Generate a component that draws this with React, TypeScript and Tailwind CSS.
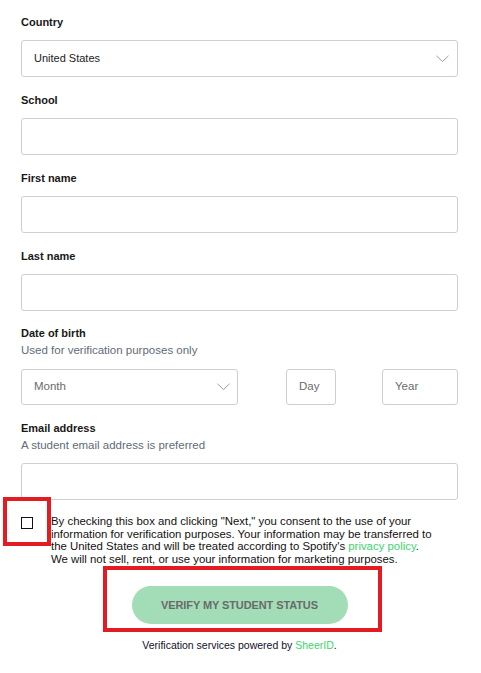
const font = "font-['Liberation_Sans',Arial,sans-serif]"

const Chevron = () => (
  <svg width="13" height="8" viewBox="0 0 13 8" fill="none" className="shrink-0">
    <path d="M0.5 0.8 6.5 6.6 12.5 0.8" stroke="#9a9a9a" strokeWidth="1" />
  </svg>
)

const Label = ({ text, mt }: { text: string; mt: string }) => (
  <p className={`${mt} text-[11px] leading-[14px] font-bold text-[#181818]`}>{text}</p>
)

const Hint = ({ text }: { text: string }) => (
  <p className="mt-[3px] text-[11.5px] leading-[14px] text-[#5f6b7a]">{text}</p>
)

const Box = ({ mt, children }: { mt: string; children?: React.ReactNode }) => (
  <div className={`${mt} h-[37px] border border-[#cfcfcf] rounded-[3px] bg-white flex items-center pl-[12px] pr-[8px]`}>
    {children}
  </div>
)

const App = () => {
  return (
    <div className={`relative w-[481px] h-[673px] bg-white ${font} overflow-hidden`}>
      <div className="ml-[21px] w-[437px] pt-[15px]">
        <Label text="Country" mt="mt-0" />
        <Box mt="mt-[11px]">
          <span className="flex-1 text-[11px] text-[#222]">United States</span>
          <Chevron />
        </Box>

        <Label text="School" mt="mt-[16px]" />
        <Box mt="mt-[11px]" />

        <Label text="First name" mt="mt-[16px]" />
        <Box mt="mt-[11px]" />

        <Label text="Last name" mt="mt-[16px]" />
        <Box mt="mt-[11px]" />

        <Label text="Date of birth" mt="mt-[15px]" />
        <Hint text="Used for verification purposes only" />
        <div className="mt-[12px] flex h-[36px]">
          <div className="w-[217px] border border-[#cfcfcf] rounded-[3px] flex items-center pl-[12px] pr-[7px]">
            <span className="flex-1 text-[11.5px] text-[#6b6b6b]">Month</span>
            <Chevron />
          </div>
          <div className="ml-[48px] w-[50px] border border-[#cfcfcf] rounded-[3px] flex items-center px-[12px]">
            <span className="text-[11.5px] text-[#6b6b6b]">Day</span>
          </div>
          <div className="ml-[46px] w-[76px] border border-[#cfcfcf] rounded-[3px] flex items-center px-[12px]">
            <span className="text-[11.5px] text-[#6b6b6b]">Year</span>
          </div>
        </div>

        <Label text="Email address" mt="mt-[16px]" />
        <Hint text="A student email address is preferred" />
        <Box mt="mt-[11px]" />

        <div className="mt-[15px] flex">
          <div className="mt-[2px] w-[12px] h-[12px] border-[1.5px] border-[#111] shrink-0" />
          <p className="ml-[18px] text-[11.4px] leading-[12.6px] text-[#111] whitespace-nowrap">
            By checking this box and clicking "Next," you consent to the use of your
            <br />
            information for verification purposes. Your information may be transferred to
            <br />
            the United States and will be treated according to Spotify's{' '}
            <span className="text-[#3dd36e]">privacy policy</span>.
            <br />
            We will not sell, rent, or use your information for marketing purposes.
          </p>
        </div>

        <div className="mt-[21px] flex justify-center">
          <button className="w-[216px] h-[38px] rounded-full bg-[#a2ddb8] text-[11px] font-bold text-[#6a6a6a] tracking-[-0.1px]">
            VERIFY MY STUDENT STATUS
          </button>
        </div>

        <p className="mt-[14px] text-center text-[10.5px] leading-[14px] text-[#10102a]">
          Verification services powered by <span className="text-[#3dd36e]">SheerID</span>.
        </p>
      </div>

      <div className="absolute left-[3px] top-[497px] w-[48px] h-[49px] border-4 border-[#e31b23]" />
      <div className="absolute left-[103px] top-[566px] w-[279px] h-[66px] border-4 border-[#e31b23]" />
    </div>
  )
}

export default App
